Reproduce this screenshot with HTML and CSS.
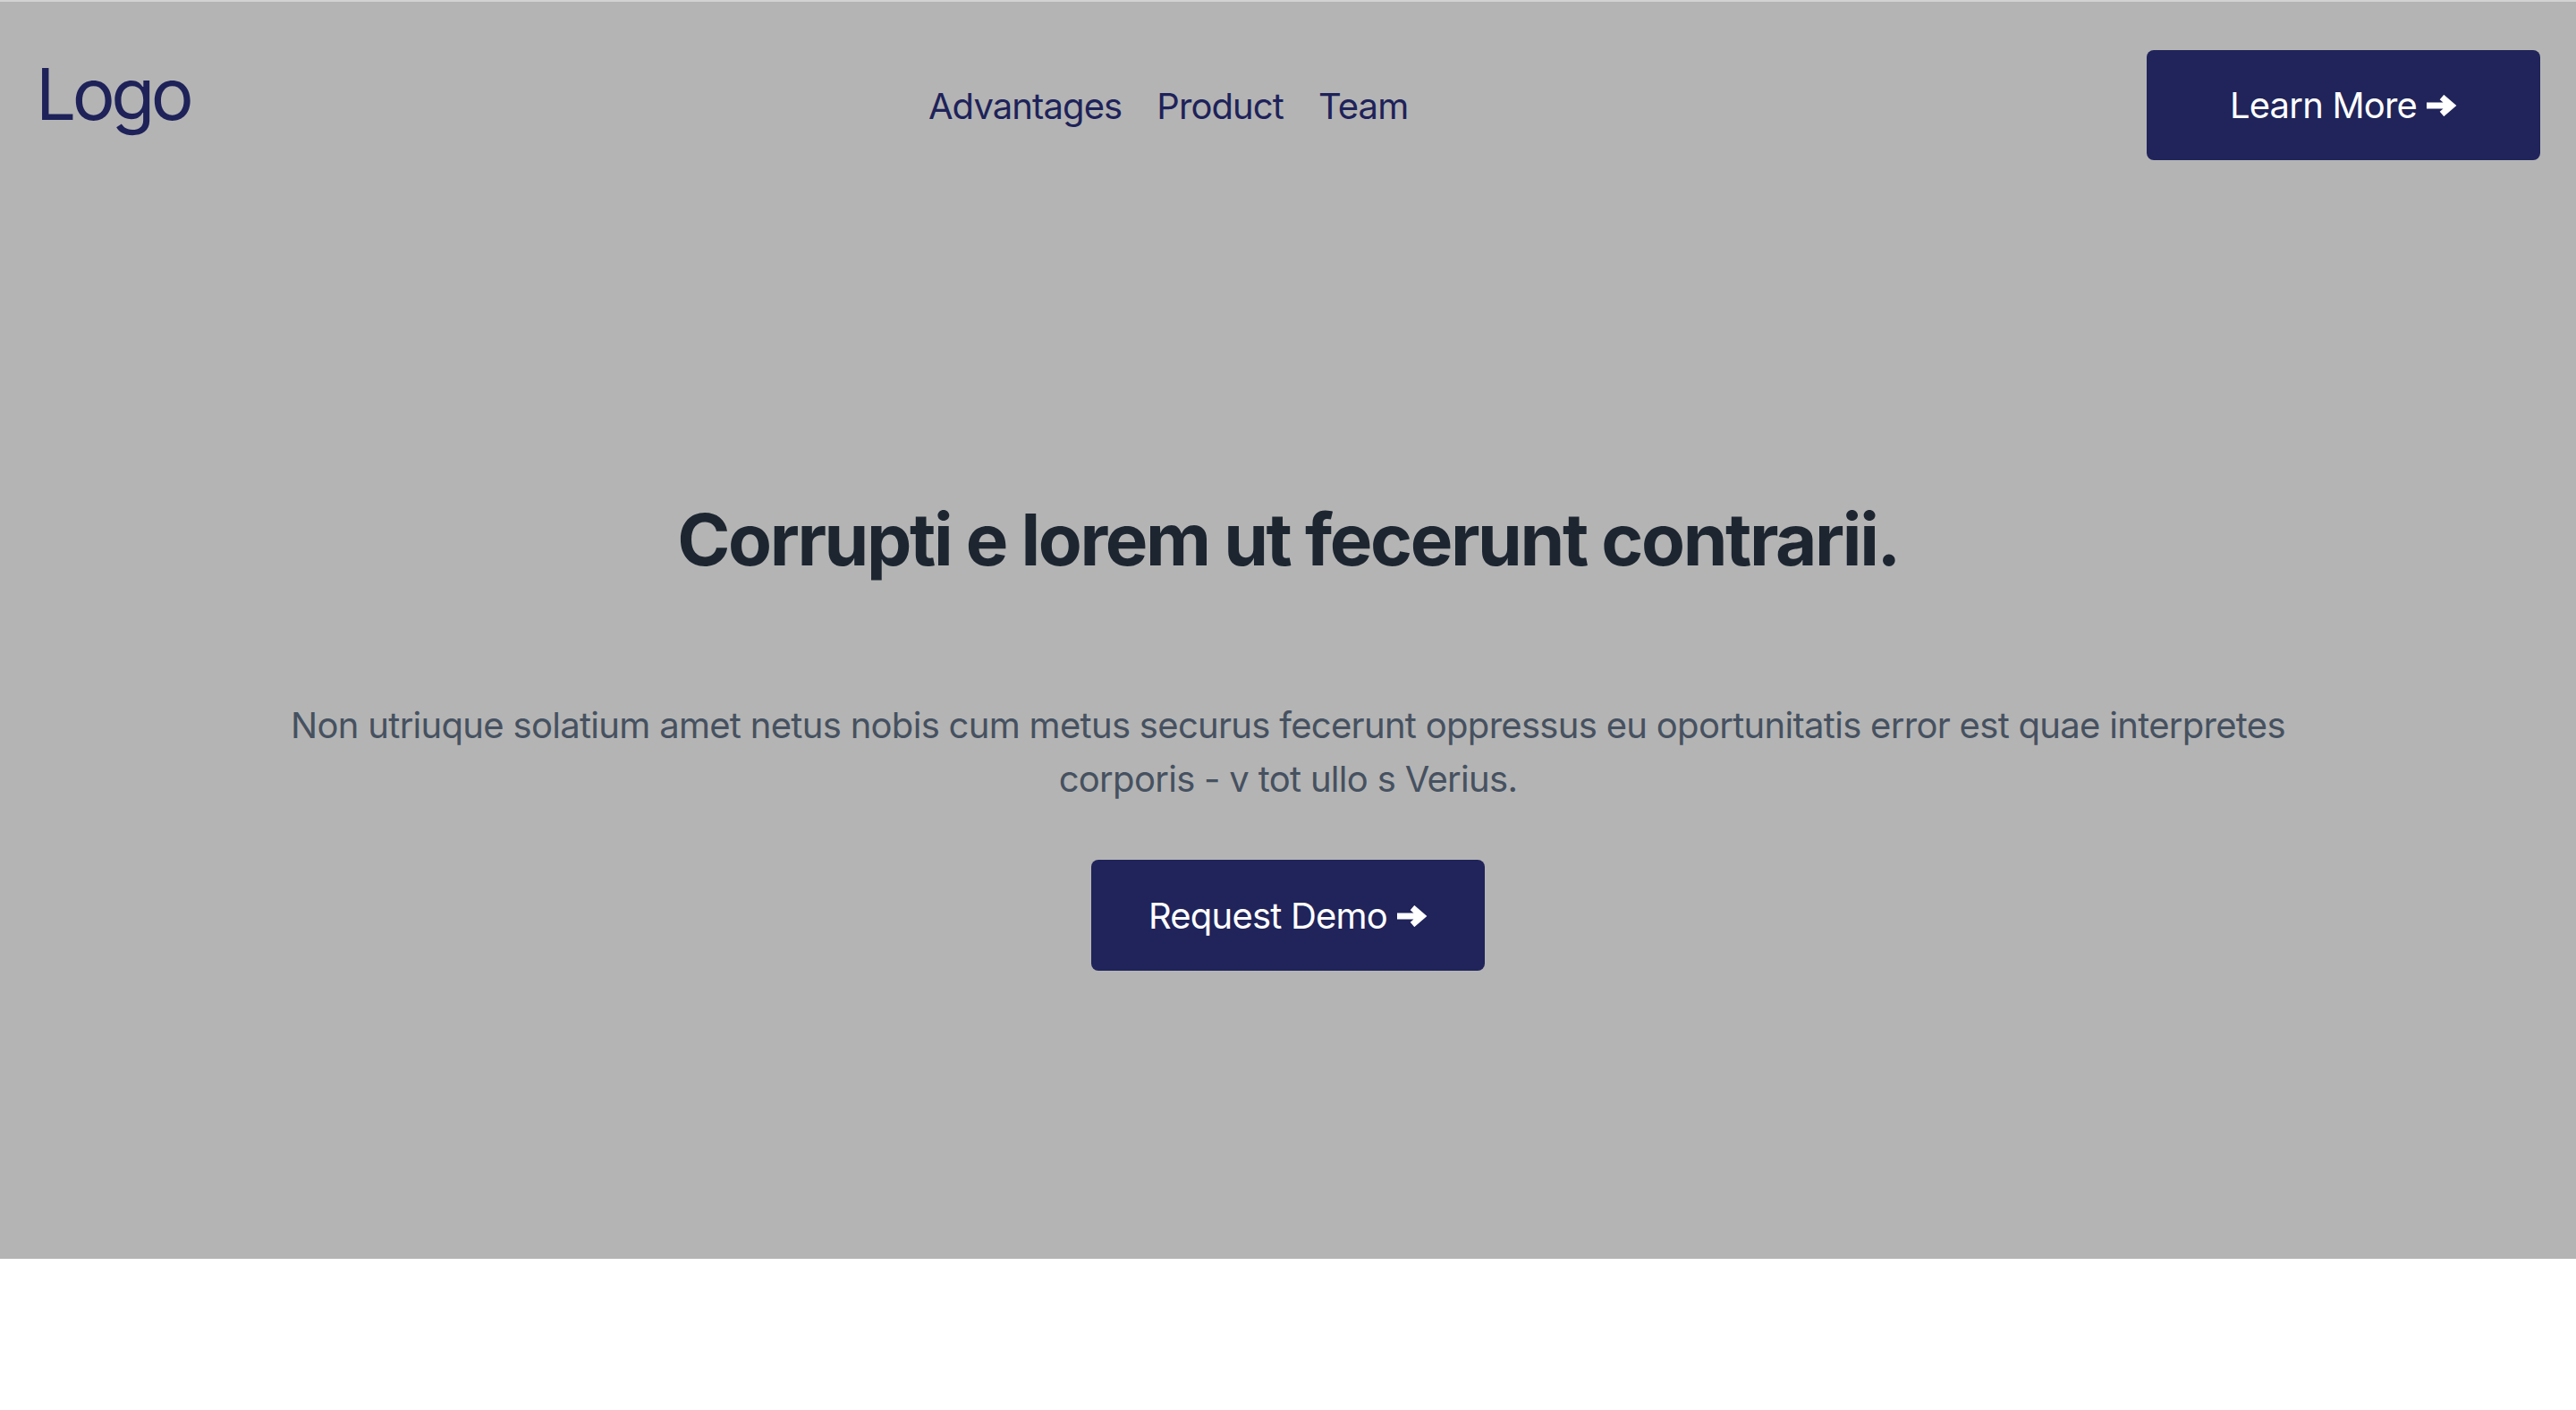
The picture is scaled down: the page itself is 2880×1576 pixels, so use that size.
FILE: index.html
```html
<!DOCTYPE html>
<html lang="en">
<head>
<meta charset="utf-8">
<title>Landing</title>
<link rel="stylesheet" href="styles.css">
</head>
<body>
<section class="hero">
  <header class="topbar">
    <div class="logo">Logo</div>
    <nav class="nav">
      <a href="#" class="nav-link">Advantages</a>
      <a href="#" class="nav-link">Product</a>
      <a href="#" class="nav-link">Team</a>
    </nav>
    <a href="#" class="btn">Learn More <svg class="arrow" viewBox="0 0 34 24" width="34" height="24"><path d="M0 12 H27 M17 2.5 L28 12 L17 21.5" fill="none" stroke="#ffffff" stroke-width="7" stroke-linejoin="miter"/></svg></a>
  </header>
  <div class="hero-body">
    <h1 class="title">Corrupti e lorem ut fecerunt contrarii.</h1>
    <p class="lead">Non utriuque solatium amet netus nobis cum metus securus fecerunt oppressus eu oportunitatis error est quae interpretes corporis - v tot ullo s Verius.</p>
    <a href="#" class="btn">Request Demo <svg class="arrow" viewBox="0 0 34 24" width="34" height="24"><path d="M0 12 H27 M17 2.5 L28 12 L17 21.5" fill="none" stroke="#ffffff" stroke-width="7" stroke-linejoin="miter"/></svg></a>
  </div>
</section>
</body>
</html>
```

FILE: styles.css
```css
html, body {
  margin: 0;
  padding: 0;
  background: #ffffff;
}
body {
  font-family: Inter, "Noto Sans", "Liberation Sans", sans-serif;
}
.hero {
  background: #b4b4b4;
  border-top: 2px solid #d2d2d2;
  height: 1407px;
  box-sizing: border-box;
  display: flex;
  flex-direction: column;
}
.topbar {
  display: flex;
  justify-content: space-between;
  align-items: center;
  padding: 54px 40px 0 40px;
}
.logo {
  align-self: flex-start;
  font-size: 80px;
  line-height: 97px;
  color: #1e2259;
  letter-spacing: -4.5px;
}
.nav {
  display: flex;
  gap: 39px;
  margin-right: 0;
  margin-top: 2px;
}
.nav-link {
  font-size: 40px;
  color: #1e2259;
  text-decoration: none;
  letter-spacing: -0.9px;
}
.btn {
  display: inline-flex;
  align-items: center;
  justify-content: center;
  gap: 11px;
  width: 440px;
  height: 123px;
  box-sizing: border-box;
  border-radius: 8px;
  background: #20245a;
  color: #ffffff;
  font-size: 40px;
  letter-spacing: -0.8px;
  text-decoration: none;
}
.arrow {
  display: block;
  margin-top: 1px;
}
.hero-body {
  display: flex;
  flex-direction: column;
  align-items: center;
  text-align: center;
}
.title {
  margin: 376px 0 0 0;
  font-size: 80px;
  line-height: 96px;
  font-weight: 700;
  color: #1d2630;
  letter-spacing: -2.4px;
}
.lead {
  margin: 130px 0 0 0;
  max-width: 2300px;
  font-size: 40px;
  line-height: 60px;
  color: #465160;
  letter-spacing: -0.7px;
}
.hero-body .btn {
  margin-top: 60px;
  height: 124px;
}
```
